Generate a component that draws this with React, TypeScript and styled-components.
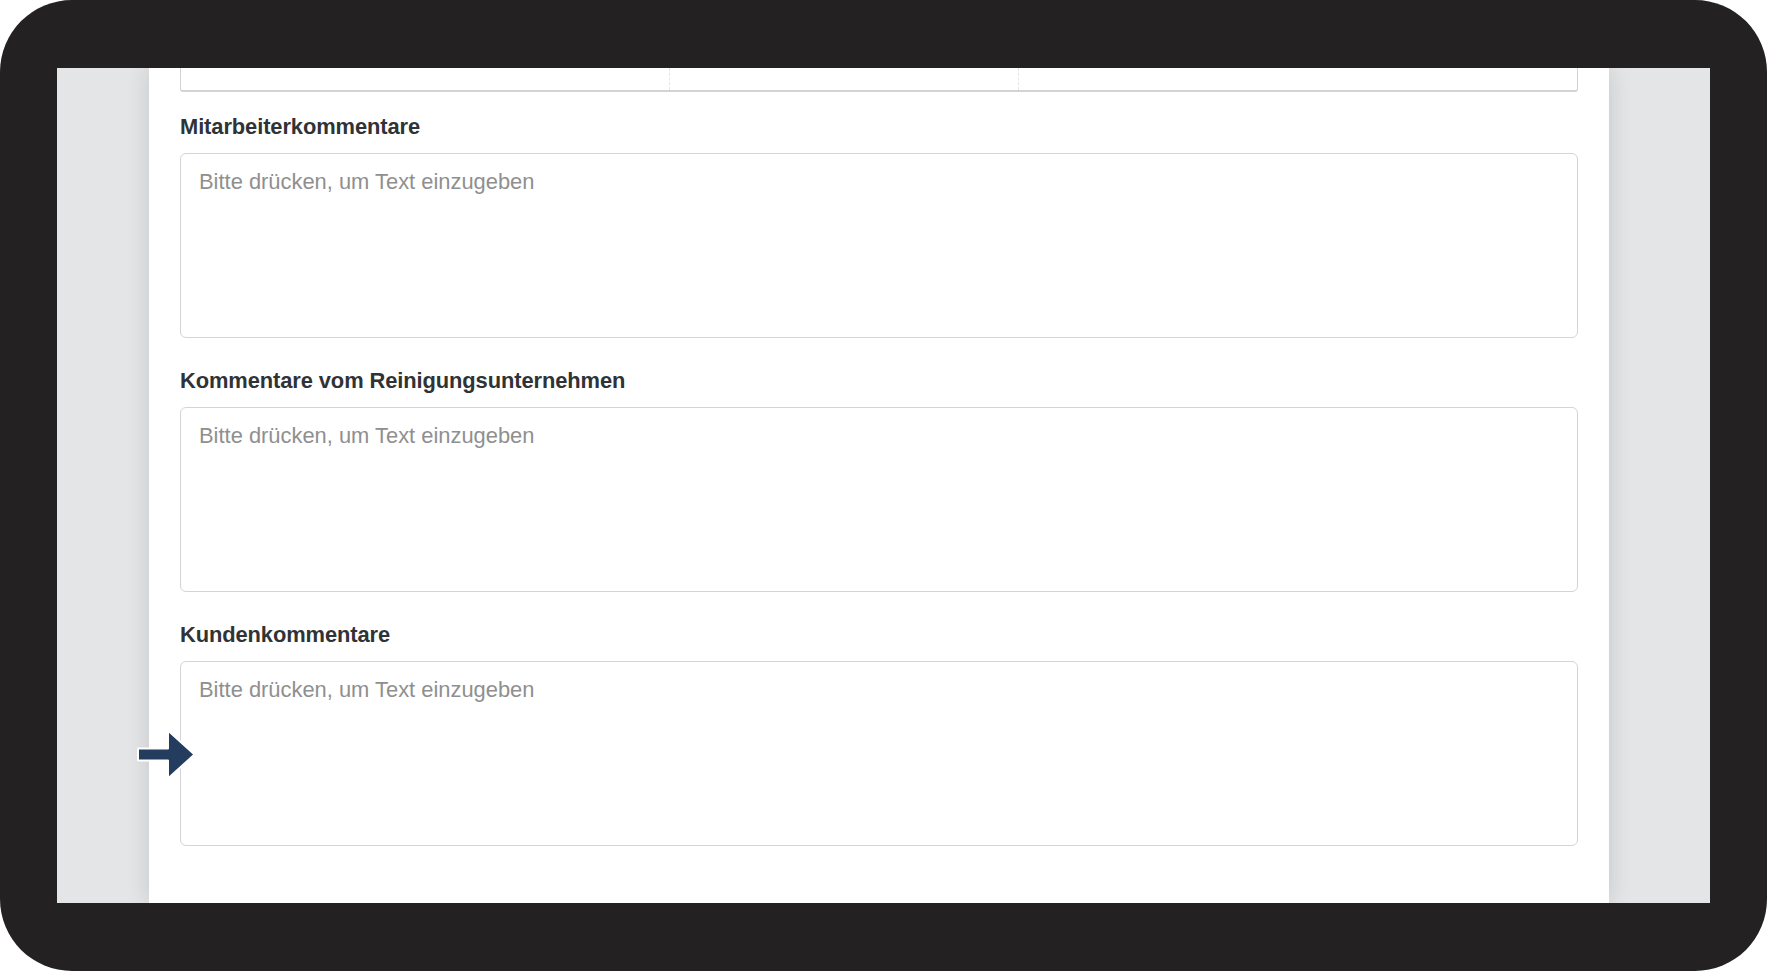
import React from "react";
import styled, { createGlobalStyle } from "styled-components";

const GlobalStyle = createGlobalStyle`
  html, body {
    margin: 0;
    padding: 0;
    background: #ffffff;
  }
  * {
    box-sizing: border-box;
  }
`;

const Frame = styled.div`
  width: 1767px;
  height: 971px;
  background: #232122;
  border-radius: 72px;
  padding: 68px 57px 68px 57px;
`;

const Screen = styled.div`
  position: relative;
  width: 100%;
  height: 100%;
  background: #e4e5e7;
  overflow: hidden;
  display: flex;
  align-items: stretch;
`;

const Panel = styled.div`
  margin-left: 92px;
  width: 1460px;
  height: 100%;
  background: #ffffff;
  box-shadow: 0 0 22px rgba(0, 0, 0, 0.14);
  padding: 0 31px;
  display: flex;
  flex-direction: column;
`;

const TableTail = styled.div`
  height: 24px;
  display: grid;
  grid-template-columns: 489px 349px 1fr;
  border: 1px solid #d3d3d3;
  border-top: none;
  border-bottom-width: 2px;
  border-radius: 0 0 3px 3px;
`;

const TableCell = styled.div<{ $last?: boolean }>`
  border-right: ${(p) => (p.$last ? "none" : "1px dashed #e4e4e4")};
`;

const Form = styled.div`
  display: flex;
  flex-direction: column;
  gap: 30px;
  margin-top: 22px;
`;

const Section = styled.div`
  display: flex;
  flex-direction: column;
`;

const Label = styled.label`
  font-family: "Liberation Sans", Arial, sans-serif;
  font-weight: 700;
  font-size: 21.9px;
  line-height: 26px;
  color: #303336;
  margin-bottom: 13px;
  letter-spacing: -0.1px;
`;

const Comment = styled.textarea`
  display: block;
  width: 100%;
  height: 185px;
  resize: none;
  border: 1.5px solid #d4d4d4;
  border-radius: 6px;
  padding: 15px 18px;
  font-family: "Liberation Sans", Arial, sans-serif;
  font-size: 21.9px;
  line-height: 26px;
  color: #303336;
  background: #ffffff;
  outline: none;

  &::placeholder {
    color: #8f8f8f;
    opacity: 1;
  }
`;

const Pointer = styled.svg`
  position: absolute;
  left: 78px;
  top: 660px;
  width: 62px;
  height: 54px;
  overflow: visible;
`;

const fields = [
  "Mitarbeiterkommentare",
  "Kommentare vom Reinigungsunternehmen",
  "Kundenkommentare",
];

export default function App() {
  return (
    <>
      <GlobalStyle />
      <Frame>
        <Screen>
          <Panel>
            <TableTail>
              <TableCell />
              <TableCell />
              <TableCell $last />
            </TableTail>
            <Form>
              {fields.map((name) => (
                <Section key={name}>
                  <Label>{name}</Label>
                  <Comment placeholder="Bitte drücken, um Text einzugeben" />
                </Section>
              ))}
            </Form>
          </Panel>
          <Pointer viewBox="0 0 62 54">
            <path
              d="M3 20.5 L33 20.5 L33 2.5 L59.5 26.5 L33 50.5 L33 32.5 L3 32.5 Z"
              fill="#243c5e"
              stroke="#ffffff"
              strokeWidth="2"
              strokeLinejoin="round"
            />
          </Pointer>
        </Screen>
      </Frame>
    </>
  );
}
